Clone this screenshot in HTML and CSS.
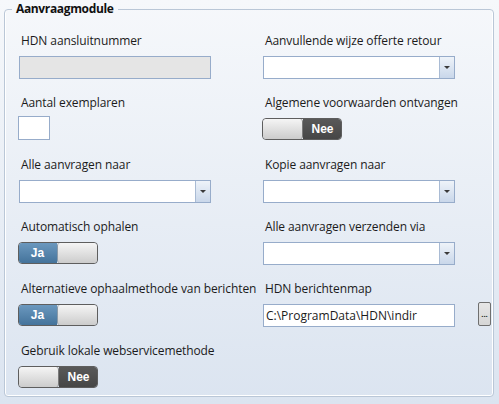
FILE: index.html
```html
<!DOCTYPE html>
<html lang="nl">
<head>
<meta charset="utf-8">
<title>Aanvraagmodule</title>
<link rel="stylesheet" href="styles.css">
</head>
<body>
<fieldset class="group">
  <legend class="group-title">Aanvraagmodule</legend>
  <div class="form-grid">
    <div class="field">
      <div class="label">HDN aansluitnummer</div>
      <div class="textbox textbox-disabled"></div>
    </div>
    <div class="field">
      <div class="label">Aanvullende wijze offerte retour</div>
      <div class="combo"><span class="combo-value"></span><span class="combo-btn"><span class="combo-arrow"></span></span></div>
    </div>

    <div class="field">
      <div class="label">Aantal exemplaren</div>
      <div class="numbox"></div>
    </div>
    <div class="field">
      <div class="label">Algemene voorwaarden ontvangen</div>
      <div class="toggle toggle-off"><span class="toggle-thumb"></span><span class="toggle-state">Nee</span></div>
    </div>

    <div class="field">
      <div class="label">Alle aanvragen naar</div>
      <div class="combo"><span class="combo-value"></span><span class="combo-btn"><span class="combo-arrow"></span></span></div>
    </div>
    <div class="field">
      <div class="label">Kopie aanvragen naar</div>
      <div class="combo"><span class="combo-value"></span><span class="combo-btn"><span class="combo-arrow"></span></span></div>
    </div>

    <div class="field">
      <div class="label">Automatisch ophalen</div>
      <div class="toggle toggle-on"><span class="toggle-state">Ja</span><span class="toggle-thumb"></span></div>
    </div>
    <div class="field">
      <div class="label">Alle aanvragen verzenden via</div>
      <div class="combo"><span class="combo-value"></span><span class="combo-btn"><span class="combo-arrow"></span></span></div>
    </div>

    <div class="field">
      <div class="label">Alternatieve ophaalmethode van berichten</div>
      <div class="toggle toggle-on"><span class="toggle-state">Ja</span><span class="toggle-thumb"></span></div>
    </div>
    <div class="field">
      <div class="label">HDN berichtenmap</div>
      <div class="path-row">
        <div class="textbox">C:\ProgramData\HDN\indir</div>
        <span class="browse-btn">...</span>
      </div>
    </div>

    <div class="field">
      <div class="label">Gebruik lokale webservicemethode</div>
      <div class="toggle toggle-off"><span class="toggle-thumb"></span><span class="toggle-state">Nee</span></div>
    </div>
  </div>
</fieldset>
</body>
</html>
```

FILE: styles.css
```css
html, body {
  margin: 0;
  padding: 0;
}

body {
  width: 499px;
  height: 404px;
  overflow: hidden;
  background: linear-gradient(#f6f8fb, #dbe4f0);
  font-family: "Open Sans", "Noto Sans", sans-serif;
  font-size: 12px;
  color: #1b1b1b;
}

.group {
  box-sizing: border-box;
  height: 396px;
  margin: 1px 5px 0 4px;
  padding: 16px 0 0 14px;
  border: 1px solid #bac7d7;
  border-radius: 4px;
  box-shadow: inset 1px 0 0 #ffffff, inset -1px 0 0 #ffffff, inset 0 -1px 0 #ffffff;
}

.group-title {
  margin-left: -7px;
  padding: 0 4px;
  font-weight: 700;
  line-height: 16px;
  letter-spacing: -0.35px;
  color: #111;
}

.form-grid {
  display: grid;
  grid-template-columns: 244px 1fr;
  grid-auto-rows: 62px;
}

.field {
  display: flex;
  flex-direction: column;
  align-items: flex-start;
}

.label {
  line-height: 16px;
  padding-left: 2px;
  margin-bottom: 7px;
  white-space: nowrap;
  letter-spacing: -0.1px;
}

.textbox {
  box-sizing: border-box;
  width: 192px;
  height: 23px;
  border: 1px solid #97acca;
  background: #ffffff;
  line-height: 21px;
  padding-left: 2px;
  white-space: nowrap;
  overflow: hidden;
}

.textbox-disabled {
  background: #e5e5e5;
}

.numbox {
  box-sizing: border-box;
  width: 32px;
  height: 24px;
  margin-top: -2px;
  margin-left: -1px;
  border: 1px solid #97acca;
  background: #ffffff;
}

.combo {
  box-sizing: border-box;
  width: 192px;
  height: 23px;
  display: flex;
  border: 1px solid #97acca;
  background: #ffffff;
}

.combo-value {
  flex: 1;
}

.combo-btn {
  width: 14px;
  display: flex;
  align-items: center;
  justify-content: center;
  border-left: 1px solid #a9bbd4;
  background: linear-gradient(#eef3f9, #c9d7ea);
}

.combo-arrow {
  width: 0;
  height: 0;
  border-left: 3px solid transparent;
  border-right: 3px solid transparent;
  border-top: 3px solid #3a3a3a;
}

.toggle {
  box-sizing: border-box;
  width: 80px;
  height: 22px;
  margin-left: -1px;
  display: flex;
  border: 1px solid #5e5e5e;
  border-radius: 4px;
  overflow: hidden;
  font-family: "Liberation Sans", Arial, sans-serif;
  font-weight: 700;
  font-size: 12px;
  color: #ffffff;
}

.toggle-state {
  flex: 1;
  display: flex;
  align-items: center;
  justify-content: center;
  line-height: 20px;
}

.toggle-on .toggle-state {
  background: linear-gradient(#6b98be, #44739b);
  padding-right: 1px;
}

.toggle-off .toggle-state {
  background: linear-gradient(#595959, #464646);
  padding-left: 1px;
}

.toggle-thumb {
  width: 39px;
  background: linear-gradient(#f5f5f5, #cccccc);
  border-radius: 3px;
}

.toggle-on .toggle-thumb {
  border-left: 1px solid #8a9aa8;
}

.toggle-off .toggle-thumb {
  border-right: 1px solid #7a7a7a;
}

.path-row {
  display: flex;
  align-items: flex-start;
  gap: 23px;
}

.browse-btn {
  box-sizing: border-box;
  width: 13px;
  height: 24px;
  margin-top: -2px;
  border: 1px solid #6f6f6f;
  border-radius: 2px;
  background: linear-gradient(#e6e6e6, #d6d6d6);
  font-family: "Liberation Sans", Arial, sans-serif;
  font-size: 8px;
  font-weight: 700;
  line-height: 24px;
  text-align: center;
  letter-spacing: 0;
  color: #222;
  overflow: hidden;
}
```
